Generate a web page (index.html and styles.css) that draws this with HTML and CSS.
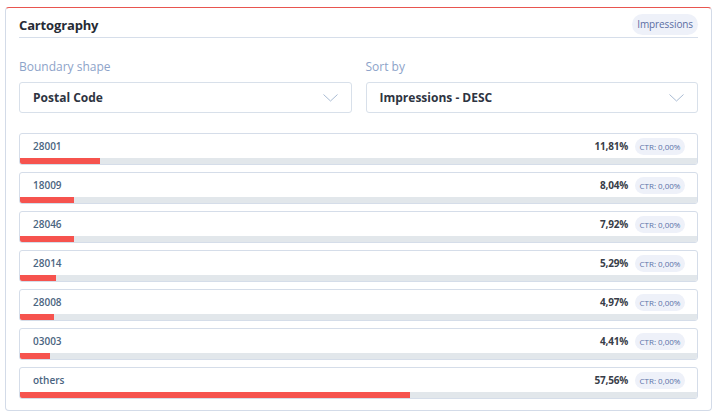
FILE: index.html
```html
<!DOCTYPE html>
<html>
<head>
<meta charset="utf-8">
<link rel="stylesheet" href="styles.css">
</head>
<body>
<div class="card">
  <div class="card-header">
    <h2 class="title">Cartography</h2>
    <span class="pill">Impressions</span>
  </div>
  <div class="filters">
    <div class="field">
      <label class="field-label">Boundary shape</label>
      <div class="select">
        <span>Postal Code</span>
        <svg class="chev" width="15" height="8" viewBox="0 0 15 8"><path d="M0.5 0.5 L7.5 7 L14.5 0.5" fill="none" stroke="#a9bbd3" stroke-width="1"/></svg>
      </div>
    </div>
    <div class="field">
      <label class="field-label">Sort by</label>
      <div class="select">
        <span>Impressions - DESC</span>
        <svg class="chev" width="15" height="8" viewBox="0 0 15 8"><path d="M0.5 0.5 L7.5 7 L14.5 0.5" fill="none" stroke="#a9bbd3" stroke-width="1"/></svg>
      </div>
    </div>
  </div>
  <div class="rows">
    <div class="row"><div class="row-top"><span class="code">28001</span><span class="pct">11,81%</span><span class="ctr">CTR: 0,00%</span></div><div class="bar"><div class="fill" style="width:11.81%"></div></div></div>
    <div class="row"><div class="row-top"><span class="code">18009</span><span class="pct">8,04%</span><span class="ctr">CTR: 0,00%</span></div><div class="bar"><div class="fill" style="width:8.04%"></div></div></div>
    <div class="row"><div class="row-top"><span class="code">28046</span><span class="pct">7,92%</span><span class="ctr">CTR: 0,00%</span></div><div class="bar"><div class="fill" style="width:7.92%"></div></div></div>
    <div class="row"><div class="row-top"><span class="code">28014</span><span class="pct">5,29%</span><span class="ctr">CTR: 0,00%</span></div><div class="bar"><div class="fill" style="width:5.29%"></div></div></div>
    <div class="row"><div class="row-top"><span class="code">28008</span><span class="pct">4,97%</span><span class="ctr">CTR: 0,00%</span></div><div class="bar"><div class="fill" style="width:4.97%"></div></div></div>
    <div class="row"><div class="row-top"><span class="code">03003</span><span class="pct">4,41%</span><span class="ctr">CTR: 0,00%</span></div><div class="bar"><div class="fill" style="width:4.41%"></div></div></div>
    <div class="row"><div class="row-top"><span class="code">others</span><span class="pct">57,56%</span><span class="ctr">CTR: 0,00%</span></div><div class="bar"><div class="fill" style="width:57.56%"></div></div></div>
  </div>
</div>
</body>
</html>
```
FILE: styles.css
```css
* { box-sizing: border-box; }
html, body { margin: 0; padding: 0; background: #fff; }
body { font-family: "Open Sans", "Noto Sans", sans-serif; padding: 7px 0 0 5px; }

.card {
  width: 707px;
  height: 404px;
  border: 1px solid #d3dbe8;
  border-top: 1px solid #e8554f;
  border-radius: 4px;
  padding: 0 13px 11px;
}

.card-header {
  height: 30px;
  display: flex;
  align-items: center;
  justify-content: space-between;
  padding: 6px 0 2px;
  border-bottom: 1px solid #d6deea;
}
.title {
  margin: 0;
  font-size: 13px;
  font-weight: 700;
  color: #272b35;
  letter-spacing: -0.15px;
}
.pill {
  height: 21px;
  line-height: 21px;
  padding: 0 5px;
  border-radius: 11px;
  background: #eef1f9;
  color: #5b6ea3;
  font-size: 10px;
  letter-spacing: -0.1px;
}

.filters {
  display: grid;
  grid-template-columns: 1fr 1fr;
  column-gap: 14px;
  padding-top: 21px;
}
.field-label {
  display: block;
  font-size: 12px;
  line-height: 16px;
  color: #8da3c9;
  margin-bottom: 7px;
}
.select {
  height: 31px;
  border: 1px solid #d8e0ea;
  border-radius: 3px;
  display: flex;
  align-items: center;
  justify-content: space-between;
  padding: 0 13px 0 13px;
  font-size: 12px;
  font-weight: 700;
  color: #2e3441;
}
.chev { display: block; margin-top: 1px; }

.rows {
  display: flex;
  flex-direction: column;
  gap: 7px;
  margin-top: 20px;
}
.row {
  height: 32px;
  border: 1px solid #d5dde9;
  border-radius: 3px;
  overflow: hidden;
  display: flex;
  flex-direction: column;
}
.row-top {
  height: 24px;
  display: flex;
  align-items: center;
  padding: 0 12px 0 13px;
}
.code {
  flex: 1;
  font-size: 10px;
  font-weight: 600;
  color: #4a6480;
}
.pct {
  font-size: 10px;
  font-weight: 700;
  color: #383d48;
  margin-right: 7px;
  letter-spacing: -0.2px;
}
.ctr {
  width: 50px;
  height: 17px;
  line-height: 17px;
  text-align: center;
  border-radius: 9px;
  background: #eef1f9;
  color: #5b72a8;
  font-size: 8px;
}
.bar {
  height: 6px;
  background: #e2e7eb;
}
.fill {
  height: 100%;
  background: #f6534e;
}
```
